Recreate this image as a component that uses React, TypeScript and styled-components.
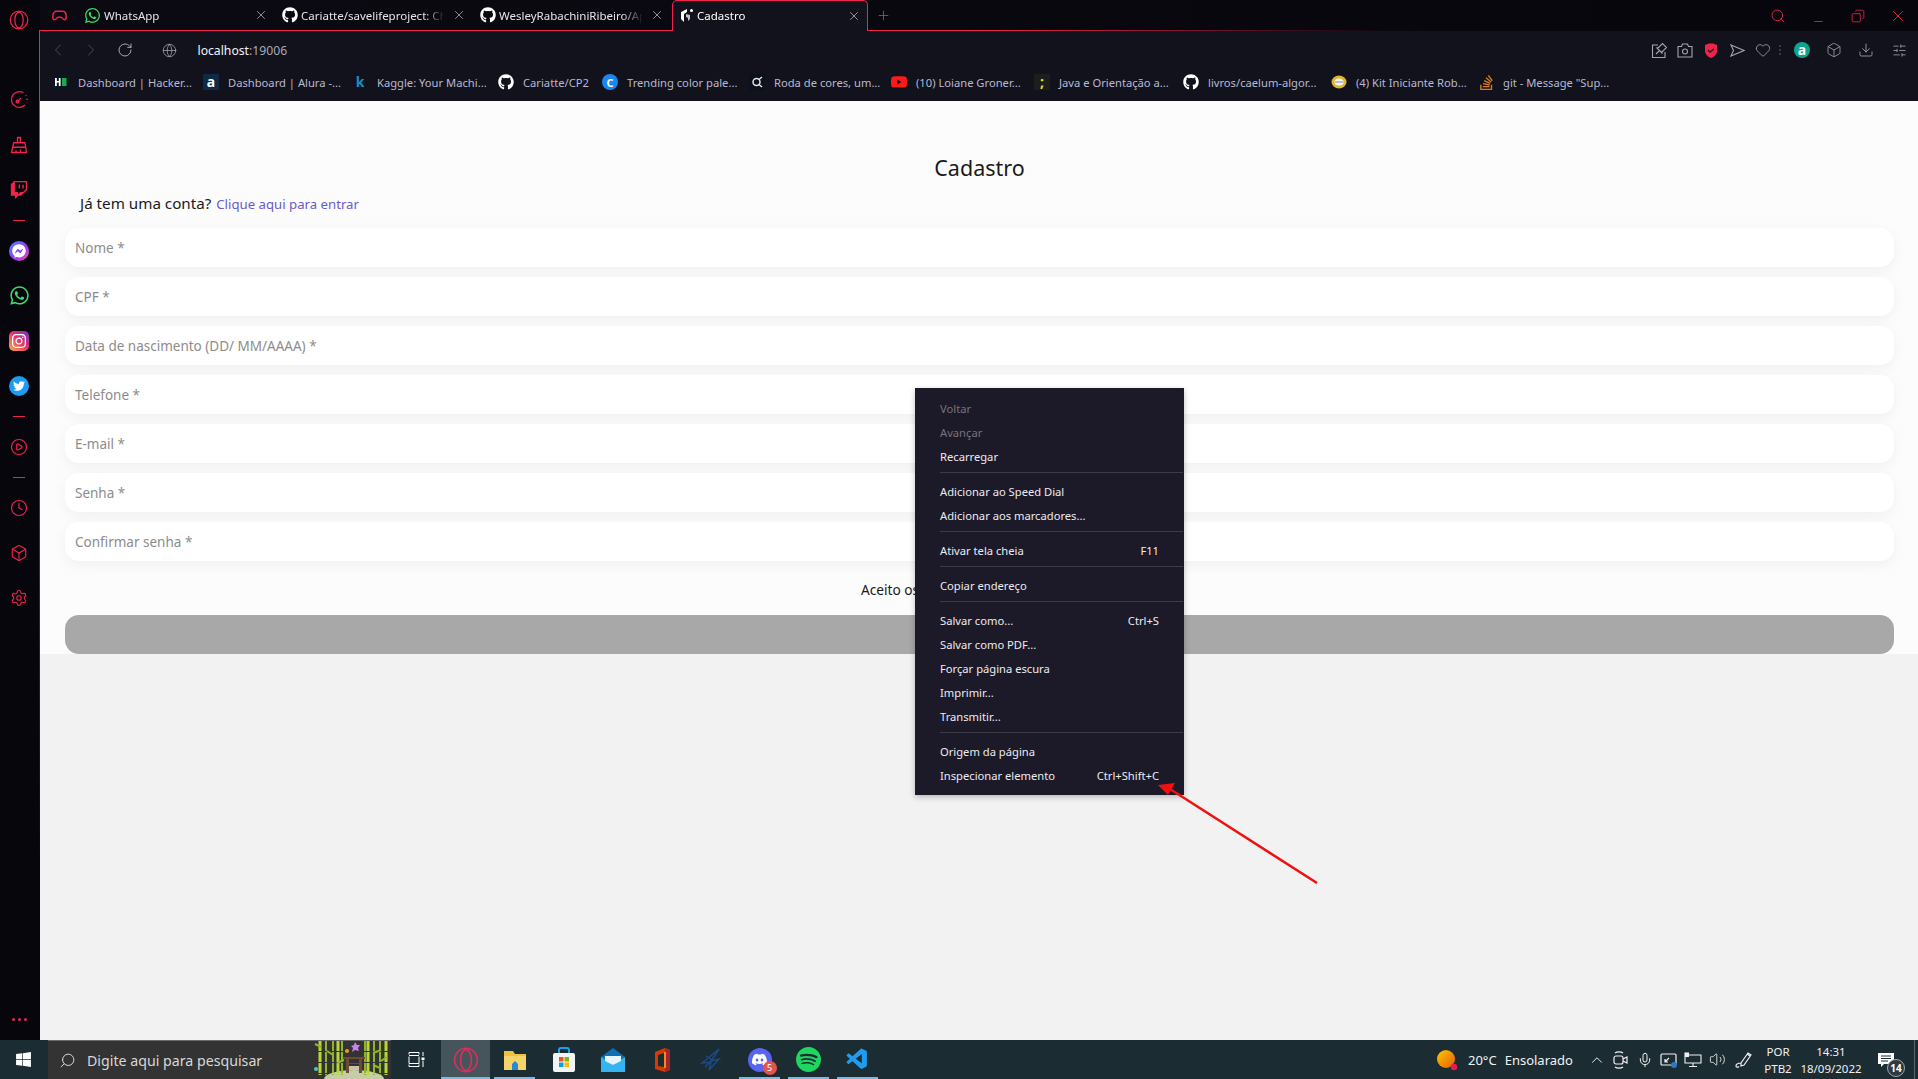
import React from "react"
import styled, { createGlobalStyle } from "styled-components"
import {
  Box,
  ChevronLeft,
  ChevronRight,
  ChevronUp,
  CirclePlay,
  Clock,
  Copy,
  Download,
  Globe,
  Heart,
  Mic,
  Minus,
  Plus,
  RotateCw,
  Search,
  Settings,
  SlidersHorizontal,
  Volume2,
  X,
} from "lucide-react"
import {
  FaFacebookMessenger,
  FaGithub,
  FaInstagram,
  FaTwitch,
  FaTwitter,
  FaWhatsapp,
  FaWindows,
} from "react-icons/fa"
import { SiDiscord, SiSpotify, SiStackoverflow, SiYoutube } from "react-icons/si"
import { VscVscode } from "react-icons/vsc"

const RED = "#f0234b"
const UI_FONT = `"Noto Sans", "Open Sans", sans-serif`

const Global = createGlobalStyle`
  html, body { margin: 0; padding: 0; height: 100%; overflow: hidden; }
  body { font-family: ${UI_FONT}; background: #f2f2f2; }
  * { box-sizing: border-box; }
`

const Screen = styled.div`
  width: 1918px;
  height: 1079px;
  display: flex;
  flex-direction: column;
  position: relative;
  overflow: hidden;
`

const Upper = styled.div`
  flex: 1;
  display: flex;
  min-height: 0;
`

/* opera sidebar */
const Sidebar = styled.aside`
  width: 40px;
  position: relative;
  background: #07060c;
  display: flex;
  flex-direction: column;
  align-items: center;
  padding-top: 6px;
  padding-right: 2px;
  &::after {
    content: "";
    position: absolute;
    right: 0;
    top: 30px;
    width: 1px;
    height: 840px;
    background: linear-gradient(180deg, ${RED} 20%, transparent);
  }
`

const OperaSlot = styled.div`
  height: 71px;
  padding-top: 4px;
`

const SideItem = styled.div`
  width: 100%;
  height: 45px;
  display: flex;
  align-items: center;
  justify-content: center;
  color: ${RED};
`

const SideDash = styled.div`
  width: 12px;
  height: 16px;
  display: flex;
  align-items: center;
  &::before {
    content: "";
    width: 100%;
    height: 1px;
    background: ${RED};
  }
`

const SideDots = styled.div`
  margin-top: auto;
  margin-bottom: 19px;
  display: flex;
  gap: 3px;
  span {
    width: 3px;
    height: 3px;
    border-radius: 50%;
    background: ${RED};
  }
`

const BrandRound = styled.div<{ $bg: string; $radius?: string; $size?: number }>`
  width: ${p => p.$size || 20}px;
  height: ${p => p.$size || 20}px;
  border-radius: ${p => p.$radius || "50%"};
  background: ${p => p.$bg};
  color: #fff;
  display: flex;
  align-items: center;
  justify-content: center;
`

/* browser chrome */
const Browser = styled.div`
  flex: 1;
  min-width: 0;
  display: flex;
  flex-direction: column;
`

const TabStrip = styled.div`
  height: 31px;
  flex: none;
  display: flex;
  align-items: stretch;
  position: relative;
  background: linear-gradient(90deg, #0b0a12, #07060c);
  &::after {
    content: "";
    position: absolute;
    left: 0;
    right: 530px;
    bottom: 0;
    height: 1px;
    background: linear-gradient(90deg, ${RED} 70%, transparent);
  }
`

const GameSlot = styled.div`
  width: 38px;
  display: flex;
  align-items: center;
  justify-content: center;
  color: ${RED};
`

const Tab = styled.div<{ $active?: boolean }>`
  width: 198px;
  display: flex;
  align-items: center;
  gap: 3px;
  padding: 0 8px 1px 6px;
  font-size: 11.5px;
  color: #e4e4e8;
  position: relative;
  z-index: 1;
  ${p =>
    p.$active &&
    `
    background: #12121c;
    border: 1px solid ${RED};
    border-bottom: none;
    border-radius: 5px 5px 0 0;
    color: #fff;
    width: 196px;
    padding-left: 7px;
    padding-right: 6px;
  `}
`

const TabTitle = styled.span`
  flex: 1;
  min-width: 0;
  overflow: hidden;
  white-space: nowrap;
  -webkit-mask-image: linear-gradient(90deg, #000 85%, transparent);
  mask-image: linear-gradient(90deg, #000 85%, transparent);
`

const TabClose = styled.span`
  color: #c8c8cc;
  display: flex;
  margin-left: 4px;
`

const NewTab = styled.div`
  width: 30px;
  display: flex;
  align-items: center;
  justify-content: center;
  color: ${RED};
`

const WindowControls = styled.div`
  margin-left: auto;
  display: flex;
  align-items: stretch;
  color: ${RED};
`

const WinButton = styled.div<{ $flip?: boolean; $low?: boolean }>`
  width: 40px;
  display: flex;
  align-items: center;
  justify-content: center;
  svg {
    ${p => p.$flip && "transform: scaleX(-1);"}
    ${p => p.$low && "transform: translateY(6px);"}
  }
`

const Toolbar = styled.div`
  height: 70px;
  flex: none;
  background: #12121c;
  display: flex;
  flex-direction: column;
`

const NavRow = styled.div`
  height: 38px;
  display: flex;
  align-items: center;
  padding-left: 1px;
  padding-right: 5px;
  color: #b4b4bc;
`

const NavButton = styled.div<{ $dim?: boolean; $w?: number }>`
  width: ${p => p.$w || 33.5}px;
  display: flex;
  justify-content: center;
  color: ${p => (p.$dim ? "#4a4a55" : "#a8a8b2")};
`

const Address = styled.div`
  font-size: 12.2px;
  color: #a8a8b8;
  b {
    font-weight: 400;
    color: #f4f4f6;
  }
`

const ActionGroup = styled.div`
  margin-left: auto;
  display: flex;
  align-items: center;
`

const ActionIcon = styled.div<{ $w?: number }>`
  width: ${p => p.$w || 26}px;
  display: flex;
  justify-content: center;
  color: #a4a4ae;
`

const ActionDots = styled.div`
  width: 7px;
  height: 12px;
  margin-left: 0;
  background: radial-gradient(circle, #3a3a46 1px, transparent 1px) center / 2px 4px repeat-y;
`

const Bookmarks = styled.div`
  height: 32px;
  display: flex;
  align-items: center;
  padding-left: 13px;
  padding-bottom: 6px;
`

const Bookmark = styled.div<{ $w: number }>`
  width: ${p => p.$w}px;
  display: flex;
  align-items: center;
  gap: 9px;
  font-size: 11.2px;
  color: #b9b9d2;
  white-space: nowrap;
`

const BookIcon = styled.span<{ $bg?: string; $color?: string }>`
  width: 16px;
  height: 16px;
  flex: none;
  display: flex;
  align-items: center;
  justify-content: center;
  background: ${p => p.$bg || "transparent"};
  color: ${p => p.$color || "#fff"};
  font-size: 14px;
  font-weight: 700;
  line-height: 1;
`

const RoundGlyph = styled(BookIcon)`
  border-radius: 50%;
  font-size: 11px;
`

/* page */
const Page = styled.main`
  flex: 1;
  background: #f2f2f2;
  min-height: 0;
`

const FormArea = styled.section`
  background: #fcfcfc;
  height: 553px;
  padding: 0 24px 0 25px;
  display: flex;
  flex-direction: column;
`

const Title = styled.h1`
  margin: 52px 0 0;
  font-size: 21.5px;
  line-height: 30px;
  font-weight: 400;
  text-align: center;
  color: #1a1a1a;
`

const LoginLine = styled.p`
  margin: 5px 0 10px 15px;
  height: 30px;
  line-height: 30px;
  font-size: 15.2px;
  color: #1a1a1a;
`

const LoginLink = styled.a`
  color: #6a5acd;
  font-size: 13.2px;
  margin-left: 1px;
`

const Field = styled.div`
  height: 39px;
  flex: none;
  margin-bottom: 10px;
  border-radius: 14px;
  background: #fff;
  box-shadow: 0 4px 14px rgba(0, 0, 0, 0.05);
  padding: 0 10px;
  display: flex;
  align-items: center;
  font-size: 13.5px;
  color: #8c8c8c;
`

const Terms = styled.div`
  margin-top: 6px;
  height: 25px;
  line-height: 25px;
  text-align: center;
  font-size: 13.7px;
  color: #1a1a1a;
`

const SubmitBar = styled.div`
  margin-top: 13px;
  height: 39px;
  flex: none;
  border-radius: 14px;
  background: #a8a8a8;
`

/* context menu */
const Menu = styled.nav`
  position: absolute;
  left: 915px;
  top: 388px;
  width: 269px;
  padding: 8px 0 8px;
  background: #1c1a28;
  box-shadow: 0 2px 6px rgba(0, 0, 0, 0.25);
  font-size: 11.2px;
`

const MenuItem = styled.div<{ $off?: boolean }>`
  height: 24px;
  padding: 0 25px;
  display: flex;
  align-items: center;
  justify-content: space-between;
  color: ${p => (p.$off ? "#75737f" : "#ecebf1")};
`

const MenuLine = styled.div`
  height: 1px;
  margin: 4px 1px 6px 25px;
  background: #3d3b47;
`

const ArrowLayer = styled.svg`
  position: absolute;
  left: 1150px;
  top: 775px;
`

/* windows taskbar */
const Taskbar = styled.footer`
  height: 39px;
  flex: none;
  background: #1c2c33;
  display: flex;
  align-items: stretch;
  color: #fff;
`

const StartButton = styled.div`
  width: 48px;
  display: flex;
  align-items: center;
  justify-content: center;
  padding-right: 2px;
`

const SearchBox = styled.div`
  width: 343px;
  background: #333;
  border-top: 1px solid #6a6a6a;
  display: flex;
  align-items: center;
  padding-left: 11px;
  font-size: 14.2px;
  color: #d8d8d8;
  gap: 11px;
  svg:first-child {
    transform: scaleX(-1);
  }
`

const Bamboo = styled.svg`
  margin-left: auto;
  flex: none;
`

const TaskView = styled.div`
  width: 50px;
  display: flex;
  align-items: center;
  justify-content: center;
`

const TaskItem = styled.div<{ $active?: boolean; $open?: boolean }>`
  width: 49px;
  display: flex;
  align-items: center;
  justify-content: center;
  position: relative;
  background: ${p => (p.$active ? "#46545b" : "transparent")};
  ${p =>
    p.$open &&
    `
    &::after {
      content: "";
      position: absolute;
      left: ${p.$active ? 0 : 4}px;
      right: ${p.$active ? 0 : 4}px;
      bottom: 0;
      height: 2px;
      background: #76b9ed;
    }
  `}
`

const DiscordWrap = styled.div`
  position: relative;
  width: 24px;
  height: 24px;
  border-radius: 50%;
  background: #5865f2;
  display: flex;
  align-items: center;
  justify-content: center;
`

const DiscordBadge = styled.span`
  position: absolute;
  right: -5px;
  bottom: -3px;
  width: 14px;
  height: 14px;
  border-radius: 50%;
  background: #e5534b;
  font-size: 9px;
  line-height: 14px;
  text-align: center;
  color: #fff;
`

const Tray = styled.div`
  margin-left: auto;
  display: flex;
  align-items: center;
  font-size: 13px;
`

const Weather = styled.div`
  width: 151px;
  display: flex;
  align-items: center;
  gap: 8px;
  font-size: 13px;
  color: #f2f2f2;
`

const TrayIcon = styled.div<{ $w?: number }>`
  width: ${p => p.$w || 24}px;
  display: flex;
  justify-content: center;
  color: #f0f0f0;
`

const TwoLines = styled.div<{ $w: number }>`
  width: ${p => p.$w}px;
  text-align: center;
  font-size: 11.5px;
  line-height: 17px;
  color: #f0f0f0;
`

const Notify = styled.div`
  width: 44px;
  position: relative;
  display: flex;
  justify-content: center;
`

const NotifyCount = styled.span`
  position: absolute;
  left: 23px;
  top: 6px;
  width: 18px;
  height: 18px;
  border-radius: 50%;
  background: #2d3a40;
  border: 1px solid #a0a8ac;
  font-size: 10px;
  font-weight: 700;
  line-height: 16px;
  text-align: center;
`

const ShowDesktop = styled.div`
  width: 10px;
  align-self: stretch;
  &::before {
    content: "";
    display: block;
    width: 1px;
    height: 100%;
    margin-left: 6px;
    background: #59666c;
  }
`

const OperaLogo = ({ size = 20, color = RED }: { size?: number; color?: string }) => (
  <svg width={size} height={size} viewBox="0 0 24 24" fill="none" stroke={color} strokeWidth="1.5">
    <ellipse cx="12" cy="12" rx="10.500" ry="10.800" />
    <ellipse cx="12" cy="12" rx="5" ry="9.500" />
  </svg>
)

const GaugeIcon = () => (
  <svg width="19" height="19" viewBox="0 0 24 24" fill="none" stroke={RED} strokeWidth="1.600">
    <path d="M19 19A10 10 0 1 1 17 3.500" />
    <path d="M20 6.500l.5 1M21.500 11v1.500M21 16v.5" strokeWidth="2" />
    <path d="M9 15l5-5" />
    <circle cx="9.500" cy="14.500" r="1.800" />
  </svg>
)

const GameIcon = () => (
  <svg width="15" height="11" viewBox="0 0 24 18" fill="none" stroke={RED} strokeWidth="2.400">
    <path d="M7 2h10c3.500 0 6 3 6 9 0 3-1 5-3 5-2.500 0-3-4-6-4H10c-3 0-3.500 4-6 4-2 0-3-2-3-5 0-6 2.500-9 6-9z" />
  </svg>
)

const BroomIcon = () => (
  <svg width="18" height="18" viewBox="0 0 24 24" fill="none" stroke={RED} strokeWidth="1.800" strokeLinejoin="round">
    <path d="M10 9V2h4l-.5 7" />
    <path d="M5 9h15l2 13H2z" />
    <path d="M3 15h18M8 22v-3M14 22v-4" />
  </svg>
)

const CadastroFavicon = () => (
  <svg width="14" height="16" viewBox="0 0 14 16" fill="#fff">
    <path d="M7 1 1 4v7l3 3V6l3-2z" />
    <path d="M6 6v3l2 1v3l2-2V7z" opacity=".75" />
    <circle cx="11.500" cy="2.500" r="1.500" />
  </svg>
)

const HackerRankIcon = () => (
  <svg width="16" height="16" viewBox="0 0 16 16">
    <rect width="16" height="16" fill="#0b1420" />
    <path d="M2 4h1.800v3h2V4h1.800v8H5.800V8.500h-2V12H2z" fill="#fff" />
    <rect x="9" y="4" width="4.500" height="8" fill="#1ba94c" />
  </svg>
)

const RingIcon = () => (
  <svg width="16" height="16" viewBox="0 0 16 16" fill="none" stroke="#e4e4e4" strokeWidth="1.500">
    <rect width="16" height="16" fill="#0c0f1c" stroke="none" />
    <circle cx="7.500" cy="8" r="3.500" />
    <path d="M10 5.500 13 3M10 10.500l3 2.500" />
  </svg>
)

const RobotIcon = () => (
  <svg width="16" height="16" viewBox="0 0 16 16">
    <ellipse cx="8" cy="8" rx="7.500" ry="6.500" fill="#d9b82e" />
    <ellipse cx="8" cy="8" rx="4.500" ry="3.500" fill="#f4f4f4" />
    <path d="M4 8h8" stroke="#8a8a8a" strokeWidth="1" />
  </svg>
)

const PinEditIcon = () => (
  <svg width="17" height="17" viewBox="0 0 17 17" fill="none" stroke="currentColor" strokeWidth="1.100">
    <path d="M7 3H1.500v12.500H14V10" />
    <path d="M5 12l3.500-3.500M6.500 6.500 11.500 1.500l4 4-5 5zM5.500 5.500l6 6" />
  </svg>
)

const CameraIcon = () => (
  <svg width="16" height="15" viewBox="0 0 16 15" fill="none" stroke="currentColor" strokeWidth="1.100">
    <path d="M1 3.500h3.500L5.500 1h5l1 2.500H15v10.500H1z" />
    <circle cx="8" cy="8.500" r="2.500" />
  </svg>
)

const ShieldIcon = () => (
  <svg width="14" height="15" viewBox="0 0 14 15">
    <path d="M1 2 5 .5h4L13 2v6c0 3-3 6-6 7-3-1-6-4-6-7z" fill={RED} />
    <path d="M4 7l2 2 4-3" fill="none" stroke="#222" strokeWidth="1.500" />
  </svg>
)

const SendIcon = () => (
  <svg width="15" height="13" viewBox="0 0 15 13" fill="none" stroke="currentColor" strokeWidth="1.100">
    <path d="M1 1l13 5.500L1 12l2.500-5.500z" />
  </svg>
)

const SunIcon = () => (
  <svg width="26" height="26" viewBox="0 0 26 26">
    <defs>
      <linearGradient id="sun" x1="0" y1="0" x2="1" y2="1">
        <stop offset="0" stopColor="#ffc800" />
        <stop offset="1" stopColor="#e85d00" />
      </linearGradient>
    </defs>
    <circle cx="12" cy="12" r="9" fill="url(#sun)" />
    <circle cx="20" cy="20" r="3.200" fill="#e81c4f" />
  </svg>
)

const BambooArt = () => (
  <Bamboo width="78" height="38" viewBox="0 0 78 38">
    <ellipse cx="41" cy="38" rx="30" ry="9" fill="#c5cca6" />
    {[7, 13, 20, 25, 29, 52, 55, 61, 67, 73].map((x, i) => (
      <path key={x} d={`M${x} 0v34`} stroke={i % 3 === 0 ? "#b7d92f" : "#8fb62a"} strokeWidth={i % 3 === 0 ? 3 : 2} strokeDasharray="10 1" />
    ))}
    <path d="M8 6 2 3M14 10l6 4M24 22l7-3M60 12l8-3M60 24l7 3M68 20l6-4" stroke="#8fb62a" strokeWidth="2" />
    <path d="M30 16h22v2H30zM33 18h3v14h-3zM46 18h3v14h-3zM33 22h16v1H33z" fill="#6e4a32" />
    <path d="M36 25h10v4H36z" fill="#c9c2a8" />
    <path d="M42 1l2 3 3 0-2 3 1 3-4-1-3 2 1-4-2-2 3-1z" fill="#c583f0" />
    <circle cx="34" cy="10" r="2" fill="#e89a3c" />
    <circle cx="3" cy="28" r="2" fill="#48c4d8" />
  </Bamboo>
)

const TaskViewIcon = () => (
  <svg width="17" height="17" viewBox="0 0 17 17" fill="none" stroke="#fff" strokeWidth="1">
    <path d="M1 1.500h10M1 1.500v2M11 1.500v2M1 4.500h10M1 5.500v7h10v-7M1 15.500h10M1 13.500v2M11 13.500v2M15 1v4M15 9.500v6.500" />
    <rect x="13.500" y="6.500" width="3" height="2.500" fill="#fff" stroke="none" />
  </svg>
)

const FilesIcon = () => (
  <svg width="24" height="22" viewBox="0 0 24 22">
    <path d="M1 2h9l2 3h11v16H1z" fill="#f0c040" />
    <rect x="1" y="7" width="22" height="14" fill="#f7d469" />
    <path d="M9 21v-6l3-3 3 3v6z" fill="#2b88d8" />
  </svg>
)

const StoreIcon = () => (
  <svg width="24" height="26" viewBox="0 0 24 26">
    <path d="M7 6V3a2 2 0 0 1 2-2h6a2 2 0 0 1 2 2v3" fill="none" stroke="#1ea0e8" strokeWidth="2" />
    <rect x="1" y="6" width="22" height="19" rx="2" fill="#f4f4f4" />
    <rect x="7" y="10" width="4.500" height="4.500" fill="#f25022" />
    <rect x="12.500" y="10" width="4.500" height="4.500" fill="#7fba00" />
    <rect x="7" y="15.500" width="4.500" height="4.500" fill="#00a4ef" />
    <rect x="12.500" y="15.500" width="4.500" height="4.500" fill="#ffb900" />
  </svg>
)

const MailIcon = () => (
  <svg width="24" height="24" viewBox="0 0 24 24">
    <path d="M0 9 12 0l12 9v15H0z" fill="#0d6fb8" />
    <path d="M0 9l12 8 12-8v15H0z" fill="#34b4f0" />
    <path d="M4 8h16v5l-8 4-8-4z" fill="#e8f4fc" />
  </svg>
)

const OfficeIcon = () => (
  <svg width="18" height="24" viewBox="0 0 18 24">
    <path d="M2 4 12 0l5 2v20l-5 2-10-3z" fill="#d83b01" />
    <path d="M12 0l5 2v20l-5 2z" fill="#a4262c" />
    <path d="M5 7l6-2v14l-6-1z" fill="#1c2c33" />
    <path d="M12 4v16" stroke="#f08a24" strokeWidth="2" />
  </svg>
)

const DarkAppIcon = () => (
  <svg width="24" height="26" viewBox="0 0 24 26" fill="none" stroke="#1d4a85" strokeWidth="1.500">
    <path d="M3 16 20 2 12 14l8-2-10 11 2-8zM7 9l6 4M6 20l8-8" />
  </svg>
)

const MeetIcon = () => (
  <svg width="18" height="20" viewBox="0 0 18 20" fill="none" stroke="#f0f0f0" strokeWidth="1.200">
    <rect x="2" y="6" width="9" height="8" rx="2" />
    <path d="M11 9l4-2v6l-4-2M3 3c2-1.500 6-1.500 8 0M3 17c2 1.500 6 1.500 8 0" />
  </svg>
)

const DisplayIcon = () => (
  <svg width="18" height="18" viewBox="0 0 18 18" fill="none" stroke="#f0f0f0" strokeWidth="1.200">
    <rect x="1" y="3" width="15" height="11" rx="1" />
    <path d="M5 11l4-4M5 8v3h3" />
    <circle cx="14" cy="14" r="3" fill="#2b78c4" stroke="none" />
  </svg>
)

const NetworkIcon = () => (
  <svg width="18" height="16" viewBox="0 0 18 16" fill="none" stroke="#f0f0f0" strokeWidth="1.100">
    <rect x="1" y="1" width="3.500" height="3.500" fill="#f0f0f0" />
    <path d="M5 3h12v8H1V5M9 11v3M5 14.500h8" />
  </svg>
)

const PenIcon = () => (
  <svg width="18" height="18" viewBox="0 0 18 18" fill="none" stroke="#f0f0f0" strokeWidth="1.200">
    <path d="M6 12 13 2l3 2-7 10-3 1zM12 3l3 2M6 12c-3 0-5 1-5 3 0 1.500 2 1.500 3 .5" />
  </svg>
)

const NotifyGlyph = () => (
  <svg width="16" height="14" viewBox="0 0 16 14" fill="#fff">
    <path d="M0 0h16v11H6l-3 3v-3H0z" />
    <path d="M3 3h10M3 5.500h10M3 8h7" stroke="#1c2c33" strokeWidth="1" />
  </svg>
)

const sideTop = [
  <GaugeIcon key="g" />,
  <BroomIcon key="b" />,
  <FaTwitch key="t" size={18} />,
]

const bookmarks = [
  { w: 150, label: "Dashboard | Hacker...", icon: <HackerRankIcon /> },
  { w: 149, label: "Dashboard | Alura -...", icon: <BookIcon $bg="#0e2a44">a</BookIcon> },
  { w: 146, label: "Kaggle: Your Machi...", icon: <BookIcon $color="#1a8fc4">k</BookIcon> },
  { w: 104, label: "Cariatte/CP2", icon: <BookIcon><FaGithub size={16} /></BookIcon> },
  { w: 147, label: "Trending color pale...", icon: <RoundGlyph $bg="#1a87f0">C</RoundGlyph> },
  { w: 142, label: "Roda de cores, um...", icon: <RingIcon /> },
  { w: 143, label: "(10) Loiane Groner...", icon: <BookIcon><SiYoutube size={16} color="#ff1a1a" /></BookIcon> },
  { w: 149, label: "Java e Orientação a...", icon: <BookIcon $bg="#1d1d1d" $color="#f5e020">;</BookIcon> },
  { w: 148, label: "livros/caelum-algor...", icon: <BookIcon><FaGithub size={16} /></BookIcon> },
  { w: 147, label: "(4) Kit Iniciante Rob...", icon: <RobotIcon /> },
  { w: 126, label: "git - Message \"Sup...", icon: <BookIcon><SiStackoverflow size={15} color="#d97a1e" /></BookIcon> },
]

const fields = [
  "Nome *",
  "CPF *",
  "Data de nascimento (DD/ MM/AAAA) *",
  "Telefone *",
  "E-mail *",
  "Senha *",
  "Confirmar senha *",
]

const menuGroups: { label: string; key?: string; off?: boolean }[][] = [
  [{ label: "Voltar", off: true }, { label: "Avançar", off: true }, { label: "Recarregar" }],
  [{ label: "Adicionar ao Speed Dial" }, { label: "Adicionar aos marcadores..." }],
  [{ label: "Ativar tela cheia", key: "F11" }],
  [{ label: "Copiar endereço" }],
  [
    { label: "Salvar como...", key: "Ctrl+S" },
    { label: "Salvar como PDF..." },
    { label: "Forçar página escura" },
    { label: "Imprimir..." },
    { label: "Transmitir..." },
  ],
  [{ label: "Origem da página" }, { label: "Inspecionar elemento", key: "Ctrl+Shift+C" }],
]

export default function App() {
  return (
    <Screen>
      <Global />
      <Upper>
        <Sidebar>
          <OperaSlot>
            <OperaLogo />
          </OperaSlot>
          {sideTop.map(icon => (
            <SideItem key={icon.key}>{icon}</SideItem>
          ))}
          <SideDash />
          <SideItem>
            <BrandRound $bg="linear-gradient(135deg, #3a8cff, #a033ff 60%, #ff5c87)">
              <FaFacebookMessenger size={14} />
            </BrandRound>
          </SideItem>
          <SideItem>
            <FaWhatsapp size={21} color="#3ddc6a" />
          </SideItem>
          <SideItem>
            <BrandRound $radius="5px" $bg="linear-gradient(45deg, #fdb045, #e1306c 55%, #6a35d0)">
              <FaInstagram size={16} />
            </BrandRound>
          </SideItem>
          <SideItem>
            <BrandRound $bg="#1d9bf0">
              <FaTwitter size={12} />
            </BrandRound>
          </SideItem>
          <SideDash />
          <SideItem>
            <CirclePlay size={18} strokeWidth={1.6} />
          </SideItem>
          <SideDash />
          <SideItem>
            <Clock size={18} strokeWidth={1.6} />
          </SideItem>
          <SideItem>
            <Box size={18} strokeWidth={1.5} />
          </SideItem>
          <SideItem>
            <Settings size={18} strokeWidth={1.5} />
          </SideItem>
          <SideDots>
            <span />
            <span />
            <span />
          </SideDots>
        </Sidebar>

        <Browser>
          <TabStrip>
            <GameSlot>
              <GameIcon />
            </GameSlot>
            <Tab>
              <FaWhatsapp size={17} color="#3ddc6a" />
              <TabTitle>WhatsApp</TabTitle>
              <TabClose><X size={14} strokeWidth={1.2} /></TabClose>
            </Tab>
            <Tab>
              <FaGithub size={16} color="#fff" />
              <TabTitle>Cariatte/savelifeproject: Ch</TabTitle>
              <TabClose><X size={14} strokeWidth={1.2} /></TabClose>
            </Tab>
            <Tab>
              <FaGithub size={16} color="#fff" />
              <TabTitle>WesleyRabachiniRibeiro/Ap</TabTitle>
              <TabClose><X size={14} strokeWidth={1.2} /></TabClose>
            </Tab>
            <Tab $active>
              <CadastroFavicon />
              <TabTitle>Cadastro</TabTitle>
              <TabClose><X size={14} strokeWidth={1.2} /></TabClose>
            </Tab>
            <NewTab>
              <Plus size={15} strokeWidth={1.4} />
            </NewTab>
            <WindowControls>
              <WinButton><Search size={16} strokeWidth={1.4} /></WinButton>
              <WinButton $low><Minus size={13} strokeWidth={1.5} /></WinButton>
              <WinButton $flip><Copy size={14} strokeWidth={1.4} /></WinButton>
              <WinButton><X size={18} strokeWidth={1.3} /></WinButton>
            </WindowControls>
          </TabStrip>

          <Toolbar>
            <NavRow>
              <NavButton $dim><ChevronLeft size={20} strokeWidth={1.2} /></NavButton>
              <NavButton $dim><ChevronRight size={20} strokeWidth={1.2} /></NavButton>
              <NavButton><RotateCw size={16} strokeWidth={1.5} /></NavButton>
              <NavButton $w={56}><Globe size={15} strokeWidth={1.2} /></NavButton>
              <Address><b>localhost</b>:19006</Address>
              <ActionGroup>
                <ActionIcon><PinEditIcon /></ActionIcon>
                <ActionIcon><CameraIcon /></ActionIcon>
                <ActionIcon><ShieldIcon /></ActionIcon>
                <ActionIcon><SendIcon /></ActionIcon>
                <ActionIcon><Heart size={16} strokeWidth={1.2} /></ActionIcon>
                <ActionDots />
                <ActionIcon $w={38}>
                  <BrandRound $bg="#0ea58e" $size={16}>
                    <BookIcon>a</BookIcon>
                  </BrandRound>
                </ActionIcon>
                <ActionIcon><Box size={16} strokeWidth={1.2} /></ActionIcon>
                <ActionIcon $w={38}><Download size={16} strokeWidth={1.3} /></ActionIcon>
                <ActionIcon $w={28}><SlidersHorizontal size={15} strokeWidth={1.3} /></ActionIcon>
              </ActionGroup>
            </NavRow>
            <Bookmarks>
              {bookmarks.map(b => (
                <Bookmark key={b.label} $w={b.w}>
                  {b.icon}
                  {b.label}
                </Bookmark>
              ))}
            </Bookmarks>
          </Toolbar>

          <Page>
            <FormArea>
              <Title>Cadastro</Title>
              <LoginLine>
                Já tem uma conta? <LoginLink>Clique aqui para entrar</LoginLink>
              </LoginLine>
              {fields.map(f => (
                <Field key={f}>{f}</Field>
              ))}
              <Terms>Aceito os termos de uso e condições.</Terms>
              <SubmitBar />
            </FormArea>
          </Page>
        </Browser>
      </Upper>

      <Taskbar>
        <StartButton>
          <FaWindows size={17} />
        </StartButton>
        <SearchBox>
          <Search size={17} strokeWidth={1.4} />
          Digite aqui para pesquisar
          <BambooArt />
        </SearchBox>
        <TaskView>
          <TaskViewIcon />
        </TaskView>
        <TaskItem $active $open><OperaLogo size={26} color="#d8305a" /></TaskItem>
        <TaskItem $open><FilesIcon /></TaskItem>
        <TaskItem><StoreIcon /></TaskItem>
        <TaskItem><MailIcon /></TaskItem>
        <TaskItem><OfficeIcon /></TaskItem>
        <TaskItem><DarkAppIcon /></TaskItem>
        <TaskItem $open>
          <DiscordWrap>
            <SiDiscord size={15} color="#fff" />
            <DiscordBadge>5</DiscordBadge>
          </DiscordWrap>
        </TaskItem>
        <TaskItem $open><SiSpotify size={25} color="#1ed760" /></TaskItem>
        <TaskItem $open><VscVscode size={25} color="#1f9cf0" /></TaskItem>

        <Tray>
          <Weather>
            <SunIcon />
            <span>20°C</span>
            <span>Ensolarado</span>
          </Weather>
          <TrayIcon><ChevronUp size={18} strokeWidth={1.3} /></TrayIcon>
          <TrayIcon><MeetIcon /></TrayIcon>
          <TrayIcon><Mic size={16} strokeWidth={1.5} /></TrayIcon>
          <TrayIcon><DisplayIcon /></TrayIcon>
          <TrayIcon><NetworkIcon /></TrayIcon>
          <TrayIcon><Volume2 size={17} strokeWidth={1.2} /></TrayIcon>
          <TrayIcon $w={29}><PenIcon /></TrayIcon>
          <TwoLines $w={40}>POR<br />PTB2</TwoLines>
          <TwoLines $w={66}>14:31<br />18/09/2022</TwoLines>
          <Notify>
            <NotifyGlyph />
            <NotifyCount>14</NotifyCount>
          </Notify>
          <ShowDesktop />
        </Tray>
      </Taskbar>

      <Menu>
        {menuGroups.map((group, i) => (
          <React.Fragment key={group[0].label}>
            {i > 0 && <MenuLine />}
            {group.map(item => (
              <MenuItem key={item.label} $off={item.off}>
                <span>{item.label}</span>
                {item.key && <span>{item.key}</span>}
              </MenuItem>
            ))}
          </React.Fragment>
        ))}
      </Menu>

      <ArrowLayer width="175" height="115" viewBox="0 0 175 115">
        <path d="M167 108 20 14" stroke="#f01010" strokeWidth="2.500" fill="none" />
        <path d="M8 10 25 8 18 20z" fill="#f01010" />
      </ArrowLayer>
    </Screen>
  )
}
